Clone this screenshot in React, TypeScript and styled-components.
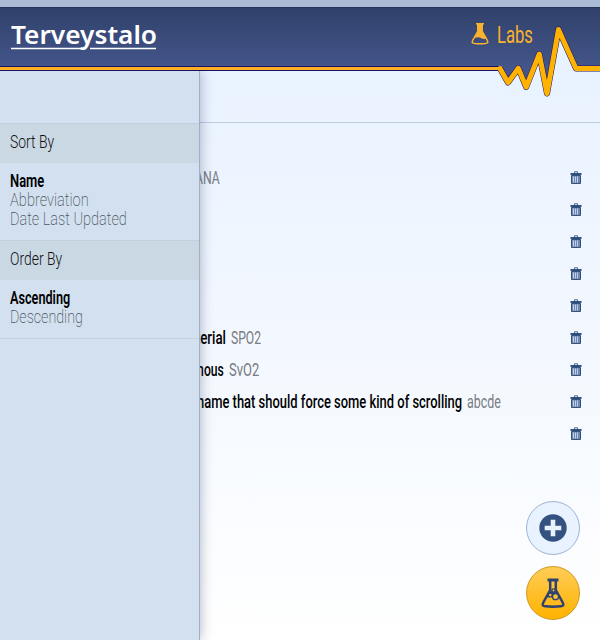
import React, { ReactNode, useLayoutEffect, useRef } from "react";
import styled, { createGlobalStyle } from "styled-components";

const GlobalStyle = createGlobalStyle`
  * { box-sizing: border-box; }
  html, body { margin: 0; height: 100%; overflow: hidden; }
  body { font-family: "Roboto", sans-serif; color: #000; }
`;

const Page = styled.div`
  display: flex;
  flex-direction: column;
  height: 640px;
  background: linear-gradient(#e9f2ff 70px, #f8fbff 470px, #fff 640px);
`;

const StatusBar = styled.div`
  height: 7px;
  flex: none;
  background: #abbbd5;
`;

const Header = styled.header`
  position: relative;
  z-index: 3;
  flex: none;
  height: 64px;
  display: flex;
  justify-content: space-between;
  padding: 0 67px 0 11px;
  border-top: 1px solid #24335a;
  background: linear-gradient(#30416b, #435589 58px);
`;

const Rule = styled.div`
  position: absolute;
  left: 0;
  right: 0;
  bottom: 0;
  height: 5px;
  background: #fdb022;
  border-top: 1px solid #1c1263;
  border-bottom: 1px solid #1c1263;
`;

const Pulse = styled.svg`
  position: absolute;
  right: 0;
  top: 12px;
`;

const Logo = styled.div`
  position: relative;
  width: 146px;
  padding-top: 12px;
`;

const LogoLine = styled.svg`
  position: absolute;
  left: 0;
  top: 39px;
`;

const Section = styled.div`
  display: flex;
  gap: 8px;
  padding-top: 13px;
  svg { margin-top: 2px; }
`;

const Body = styled.div`
  position: relative;
  flex: 1;
  display: flex;
`;

const Sidebar = styled.aside`
  position: relative;
  z-index: 2;
  width: 200px;
  padding-top: 52px;
  background: #d3e0ef;
  border-right: 1px solid #9eafc7;
  box-shadow: 0 0 12px rgba(50, 60, 90, 0.4);
`;

const GroupTitle = styled.div`
  height: 40px;
  padding: 6px 10px;
  background: #cad8e4;
  border-top: 1px solid #c0cfdf;
`;

const Options = styled.div<{ $height: number }>`
  height: ${(p) => p.$height}px;
  display: flex;
  flex-direction: column;
  padding: 8px 10px 0;
`;

const SidebarEnd = styled.div`
  height: 1px;
  background: #c4d1e0;
`;

const Main = styled.main`
  flex: 1;
  min-width: 0;
  margin-left: -20px;
`;

const Toolbar = styled.div`
  height: 52px;
  border-bottom: 1px solid #bdcde0;
`;

const List = styled.div`
  padding: 39px 18px 0 0;
`;

const Row = styled.div<{ $indent: number }>`
  height: 32px;
  display: flex;
  align-items: center;
  gap: 5px;
  padding-left: ${(p) => p.$indent}px;
  > span { margin-bottom: 2px; }
  svg { margin-left: auto; flex: none; }
`;

const Actions = styled.div`
  position: absolute;
  right: 20px;
  bottom: 20px;
  display: flex;
  flex-direction: column;
  gap: 11px;
`;

const RoundButton = styled.button<{ $primary?: boolean }>`
  width: 54px;
  height: 54px;
  padding: 0;
  border-radius: 50%;
  display: flex;
  align-items: center;
  justify-content: center;
  border: 1px solid ${(p) => (p.$primary ? "#cf9a22" : "#9db4d3")};
  background: ${(p) => (p.$primary ? "linear-gradient(#ffcc57, #ffb300)" : "#e9f2ff")};
`;

const Frame = styled.span<{ $width: number; $size: number; $line: number }>`
  display: block;
  flex: none;
  width: ${(p) => p.$width}px;
  height: ${(p) => p.$line}px;
  line-height: ${(p) => p.$line}px;
  font-size: ${(p) => p.$size}px;
  white-space: nowrap;
`;

const Glyphs = styled.span<{ $weight: number; $color: string; $family: string }>`
  display: inline-block;
  vertical-align: top;
  transform-origin: 0 0;
  font-family: ${(p) => p.$family};
  font-weight: ${(p) => p.$weight};
  color: ${(p) => p.$color};
`;

type CondensedProps = {
  width: number;
  size?: number;
  line?: number;
  weight?: number;
  color?: string;
  family?: string;
  children: ReactNode;
};

/* Narrows a line of text to the given width. */
function Condensed({
  width,
  size = 19,
  line = 19,
  weight = 400,
  color = "#000",
  family = '"Roboto", sans-serif',
  children,
}: CondensedProps) {
  const ref = useRef<HTMLSpanElement>(null);
  useLayoutEffect(() => {
    const fit = () => {
      const el = ref.current;
      if (el) el.style.transform = `scaleX(${width / el.offsetWidth})`;
    };
    fit();
    document.fonts.ready.then(fit);
  }, [width]);
  return (
    <Frame $width={width} $size={size} $line={line}>
      <Glyphs ref={ref} $weight={weight} $color={color} $family={family}>
        {children}
      </Glyphs>
    </Frame>
  );
}

const Trash = () => (
  <svg width="12" height="14" viewBox="0 0 12 14">
    <path d="M4.5 2V.8h3V2" fill="none" stroke="#4a6591" />
    <path d="M.5 2h11v2H.5z" fill="#34507f" />
    <path d="M1.500 4.500h9v8h-9z" fill="#6d87ae" stroke="#34507f" />
    <path d="M3.500 5.500v6M5.500 5.500v6M7.500 5.500v6" stroke="#c3d2e6" />
  </svg>
);

const Flask = () => (
  <svg width="18" height="22" viewBox="0 0 18 22">
    <path d="M5 .8h8M6.800 1v7.400L1.800 17c-1.300 2.700-.4 3.200 2 3.500q5.200.5 10.400 0c2.400-.3 3.300-.8 2-3.500L11.200 8.400V1" fill="none" stroke="#fbb22d" strokeWidth="1.500" />
    <path d="M6.500 1h5v7.500l4 6.500q-3 2-5.500 0-2.500-1.500-6.500 0l3-6.500z" fill="#fbb22d" />
  </svg>
);

const BubblingFlask = () => (
  <svg width="24" height="30" viewBox="0 0 24 30">
    <path d="M6.500 .5h11v3H6.500z" fill="#2d4270" />
    <path d="M9.200 3v9L2.300 24.500c-1.200 2.700-.5 3.500 2 3.800q7.700.8 15.400 0c2.500-.3 3.200-1.100 2-3.800L14.800 12V3" fill="none" stroke="#2d4270" strokeWidth="2.500" />
    <path d="M8.500 14.500l3-2.500 3.500 1.500 3.500 6q-3 1-5 1-1.500-2.500-7.500-1z" fill="#2d4270" />
    <g fill="#ffc233" stroke="#2d4270" strokeWidth="1.300">
      <circle cx="14.500" cy="18.700" r="3" />
      <circle cx="9.300" cy="17" r="1.900" />
      <circle cx="12.500" cy="12.500" r="1.600" />
    </g>
  </svg>
);

const PULSE = "M50 48.500L58 62.500 68.300 48.200 76.200 67 89.300 34 97 73.500 108.500 9.500 126 48.500H150";

type Entry = { indent: number; name?: [string, number]; abbr?: [string, number] };

const ENTRIES: Entry[] = [
  { indent: 15, abbr: ["ANA", 25] },
  { indent: 0 },
  { indent: 0 },
  { indent: 0 },
  { indent: 0 },
  { indent: 2, name: ["Arterial", 44], abbr: ["SPO2", 30] },
  { indent: 3, name: ["Venous", 41], abbr: ["SvO2", 30] },
  { indent: 17, name: ["name that should force some kind of scrolling", 265], abbr: ["abcde", 34] },
  { indent: 0 },
];

export default function App() {
  return (
    <Page>
      <GlobalStyle />
      <StatusBar />
      <Header>
        <Logo>
          <Condensed width={146} size={25} line={28} weight={600} color="#fff" family='"Noto Sans", sans-serif'>
            Terveystalo
          </Condensed>
          <LogoLine width="146" height="4">
            <path d="M0 1.500H70M79 1.500H145" stroke="#fff" strokeWidth="1.500" />
          </LogoLine>
        </Logo>
        <Section>
          <Flask />
          <Condensed width={36} size={24} line={28} weight={400} color="#fbb22d">
            Labs
          </Condensed>
        </Section>
        <Rule />
        <Pulse width="150" height="80" viewBox="0 0 150 80">
          <path d={PULSE + "V46H50Z"} fill="#435589" />
          <path d={PULSE + "V80H50Z"} fill="#e9f2ff" />
          <path d={PULSE} fill="none" stroke="#1c1263" strokeWidth="6" strokeLinejoin="round" />
          <path d={PULSE} fill="none" stroke="#ffb300" strokeWidth="5" strokeLinejoin="round" strokeLinecap="round" />
        </Pulse>
      </Header>
      <Body>
        <Sidebar>
          <GroupTitle>
            <Condensed width={44} line={24} weight={300} color="#111">Sort By</Condensed>
          </GroupTitle>
          <Options $height={77}>
            <Condensed width={34} weight={600}>Name</Condensed>
            <Condensed width={79} weight={200} color="#4d5660">Abbreviation</Condensed>
            <Condensed width={117} weight={200} color="#4d5660">Date Last Updated</Condensed>
          </Options>
          <GroupTitle>
            <Condensed width={52} line={24} weight={300} color="#111">Order By</Condensed>
          </GroupTitle>
          <Options $height={58}>
            <Condensed width={60} weight={600}>Ascending</Condensed>
            <Condensed width={73} weight={200} color="#4d5660">Descending</Condensed>
          </Options>
          <SidebarEnd />
        </Sidebar>
        <Main>
          <Toolbar />
          <List>
            {ENTRIES.map((e, i) => (
              <Row key={i} $indent={e.indent}>
                {e.name && <Condensed width={e.name[1]} weight={500}>{e.name[0]}</Condensed>}
                {e.abbr && <Condensed width={e.abbr[1]} color="#777b82">{e.abbr[0]}</Condensed>}
                <Trash />
              </Row>
            ))}
          </List>
        </Main>
        <Actions>
          <RoundButton aria-label="Add">
            <svg width="28" height="28" viewBox="0 0 28 28">
              <circle cx="14" cy="14" r="13.700" fill="#34527f" />
              <path d="M14 8v12M8 14h12" stroke="#e9f2ff" strokeWidth="4.600" strokeLinecap="square" />
            </svg>
          </RoundButton>
          <RoundButton $primary aria-label="Labs">
            <BubblingFlask />
          </RoundButton>
        </Actions>
      </Body>
    </Page>
  );
}
